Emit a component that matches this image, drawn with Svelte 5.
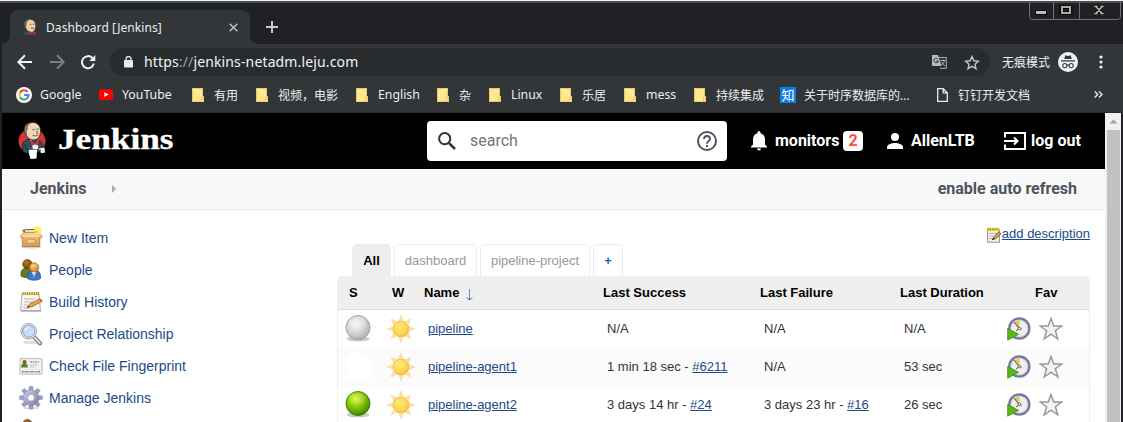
<script>
  const bookmarks = [
    { icon: 'google', label: 'Google', w: 83, gap: 24 },
    { icon: 'youtube', label: 'YouTube', w: 93, gap: 23 },
    { icon: 'folder', label: '有用', w: 64 },
    { icon: 'folder', label: '视频，电影', w: 100 },
    { icon: 'folder', label: 'English', w: 81 },
    { icon: 'folder', label: '杂', w: 52 },
    { icon: 'folder', label: 'Linux', w: 71 },
    { icon: 'folder', label: '乐居', w: 64 },
    { icon: 'folder', label: 'mess', w: 70 },
    { icon: 'folder', label: '持续集成', w: 86 },
    { icon: 'zhi', label: '关于时序数据库的...', w: 157, gap: 24 },
    { icon: 'file', label: '钉钉开发文档', w: 157, gap: 21 }
  ];
  const tasks = [
    { icon: 'box', label: 'New Item' },
    { icon: 'people', label: 'People' },
    { icon: 'notepad', label: 'Build History' },
    { icon: 'lens', label: 'Project Relationship' },
    { icon: 'card', label: 'Check File Fingerprint' },
    { icon: 'gear', label: 'Manage Jenkins' },
    { icon: 'people', label: '' }
  ];
  const jobs = [
    { ball: 'grey', name: 'pipeline', ok: 'N/A', bad: 'N/A', dur: 'N/A' },
    { ball: 'blank', name: 'pipeline-agent1', ok: '1 min 18 sec - ', okLink: '#6211', bad: 'N/A', dur: '53 sec' },
    { ball: 'green', name: 'pipeline-agent2', ok: '3 days 14 hr - ', okLink: '#24', bad: '3 days 23 hr - ', badLink: '#16', dur: '26 sec' }
  ];
  const rays = [0, 45, 90, 135, 180, 225, 270, 315];
</script>

{#snippet icon(name)}
  {#if name === 'google'}
    <svg width="16" height="16" viewBox="0 0 16 16"><circle cx="8" cy="8" r="8" fill="#fff" /><g fill="none" stroke-width="2"><path d="M11.6 4.8A4.6 4.6 0 0 0 4 5.8" stroke="#ea4335" /><path d="M4 5.8A4.6 4.6 0 0 0 4 10.3" stroke="#fbbc05" /><path d="M4 10.3A4.6 4.6 0 0 0 10.9 11.5" stroke="#34a853" /><path d="M10.9 11.5A4.6 4.6 0 0 0 12.6 8.1H8.2" stroke="#4285f4" /></g></svg>
  {:else if name === 'youtube'}
    <svg width="14" height="16" viewBox="0 0 14 16"><rect y="2.2" width="14" height="10.8" rx="2.2" fill="#f00" /><path d="M5.3 5.2 9.6 7.6 5.3 10z" fill="#fff" /></svg>
  {:else if name === 'folder'}
    <svg width="12" height="14" viewBox="0 0 12 14"><path d="M0 0H11V8H12V14H0z" fill="#ffe795" /><path d="M.5 .5H10.5V8.5H11.500V13.500H.5zM9.500 13V9" fill="none" stroke="#ecc95c" /></svg>
  {:else if name === 'zhi'}
    <span class="zhi">知</span>
  {:else if name === 'file'}
    <svg width="11" height="14" viewBox="0 0 11 14"><path d="M.7 .7H6.2L10.3 4.8V13.3H.7zM6.2 .7V4.8H10.3" fill="none" stroke="#e8eaed" stroke-width="1.3" /></svg>
  {:else if name === 'box'}
    <svg width="24" height="24" viewBox="0 0 24 24"><ellipse cx="12" cy="21" rx="10" ry="1.5" fill="#ccc" /><path d="M3 4 5 6.5H19L21 4 16 3H8z" fill="#8f5902" /><path d="M6 4h10l1 2H6z" fill="#e9dcc0" /><path d="M4.5 6.5 1 10.5 4 13.5H20.5L23.5 10.5 19.5 6.5z" fill="#f3cf92" stroke="#b87e3a" stroke-width=".7" /><path d="M3.2 10.5H20.8V20.5H3.2z" fill="url(#carton)" stroke="#a86e2c" stroke-width=".7" /><path d="M3.2 10.5H20.8" stroke="#f8dfb4" /><rect x="8" y="13.5" width="8" height="3.5" rx=".8" fill="#f2cf98" stroke="#bc823f" stroke-width=".5" /><circle cx="18.8" cy="4.2" r="4.2" fill="#ffec45" opacity=".65" /><path d="M18.8 0l1 3.1 3.2 1-3.2 1-1 3.2-1-3.2-3.2-1 3.2-1z" fill="#fff55c" /></svg>
  {:else if name === 'people'}
    <svg width="24" height="24" viewBox="0 0 24 24"><path d="M2 18c-1-7 3-8 6-8s6 1 5 8c-3 2-8 2-11 0z" fill="#617f22" stroke="#3b5310" stroke-width=".7" /><circle cx="8.4" cy="6.2" r="4.7" fill="url(#skin2)" stroke="#65400c" stroke-width=".7" /><path d="M8.5 20.5c-.6-6.5 2.5-8.5 6.5-8.5s7 2 6.5 8.5c-3.5 2.3-9.5 2.3-13 0z" fill="#3c78bd" stroke="#204a87" stroke-width=".7" /><path d="M12.6 13.4 15 19l2.3-5.6z" fill="#fff" /><path d="M14.8 14.3l-.7 4.5.9 2 .9-2z" fill="#6ba0d8" /><circle cx="15.1" cy="9.4" r="4.6" fill="url(#skin)" stroke="#a85f10" stroke-width=".7" /></svg>
  {:else if name === 'notepad'}
    <svg width="24" height="24" viewBox="0 0 24 24"><path d="M2 21.6H23" stroke="#bbb" /><path d="M3 4H20L21.5 20.5H1.5z" fill="#f4f4f2" stroke="#999" stroke-width=".8" /><path d="M3 2.6H20V5H3z" fill="#e6d06a" /><path d="M4 2v3M6.3 2v3M8.600 2v3M10.900 2v3M13.200 2v3M15.500 2v3M17.800 2v3M19.600 2v3" stroke="#a58a1e" stroke-width="1" /><path d="M5 9H16M5 12H14M4.7 15H9M4.5 18H11" stroke="#b5b5b5" stroke-width="1.1" /><path d="M8.2 17.4 11 13.8 21 8.7 23.3 11.2 13 16.7z" fill="#e9a443" stroke="#8c5a15" stroke-width=".7" /><path d="M20 9.2l2.2 2.5 1.3-.8-1.9-2.5z" fill="#d35a4a" /><path d="M8.2 17.4 9.4 15.8 10.4 17z" fill="#222" /></svg>
  {:else if name === 'lens'}
    <svg width="24" height="24" viewBox="0 0 24 24"><ellipse cx="13" cy="20.5" rx="9" ry="1.8" fill="#ddd" /><path d="M14.8 14.8 21 21.2" stroke="#777" stroke-width="4.2" stroke-linecap="round" /><path d="M15 15 20.8 21" stroke="#d6d7d4" stroke-width="2.4" stroke-linecap="round" /><circle cx="9.7" cy="9.2" r="7.8" fill="#eee" stroke="#8c8e8a" stroke-width=".8" /><circle cx="9.7" cy="9.2" r="6" fill="url(#glass)" stroke="#6d97cb" stroke-width=".9" /><path d="M5.5 9.2C5 5.5 8 4 11 4.5 9.5 6 8 9 5.5 9.2z" fill="#fff" opacity=".7" /></svg>
  {:else if name === 'card'}
    <svg width="24" height="24" viewBox="0 0 24 24"><rect x=".9" y="4.6" width="22.2" height="15.6" rx="1" fill="#f0f0ee" stroke="#aaa" stroke-width=".8" /><path d="M2 13.6c0-3 1.3-4.4 3.6-4.4s3.4 1.4 3.2 4.4z" fill="#617f22" /><circle cx="5.5" cy="8.1" r="2.1" fill="#8b5a1b" /><path d="M11 8h9" stroke="#777" stroke-dasharray="2 .6" /><path d="M11 11h7M11 13h5" stroke="#bbb" stroke-width=".8" /><path d="M3 17.900H21" stroke="#888" stroke-width="1" /><path d="M3.5 17V18M8 17V18M13 17V18M20.5 17V18" stroke="#555" /></svg>
  {:else if name === 'gear'}
    <svg width="24" height="24" viewBox="0 0 24 24"><ellipse cx="12" cy="22" rx="8" ry="1.3" fill="#ddd" />{#each rays as r}<path d="M9.800 5 10.400 .3H13.600L14.200 5z" fill="#9c9ec2" stroke="#777a9f" stroke-width=".5" transform="rotate({r} 12 11.7)" />{/each}<circle cx="12" cy="11.7" r="5.900" fill="none" stroke="#777a9f" stroke-width="4.200" /><circle cx="12" cy="11.7" r="5.700" fill="none" stroke="url(#steel)" stroke-width="4" /><circle cx="12" cy="11.7" r="3.4" fill="#fff" stroke="#777a9f" stroke-width=".6" /></svg>
  {/if}
{/snippet}

<div class="window">
  <header class="titlebar">
    <div class="tab">
      <svg class="fav" width="14" height="16" viewBox="0 0 14 16"><path d="M0 16c0-3 2-4 4-4h6c2 0 3 1 3 4z" fill="#344a57" /><path d="M2 3C3 0 10-1 12 4c1 4 0 8-3 9-4 0-7-3-7-10z" fill="#efcfaa" /><path d="M1.500 8C0 2 4 0 8 .6 5 1.500 3.600 2.500 3.600 5L3 9z" fill="#6e6057" /><path d="M7 5.3h1.4M10 5.3h1.4M8 9.2h3" stroke="#49362d" stroke-width=".8" /><path d="M6 12l2.5 1.2L12 12.5V15l-3-1-3 1.2z" fill="#d3272c" /></svg>
      <span class="tabname">Dashboard [Jenkins]</span>
      <svg width="9" height="9" viewBox="0 0 9 9"><path d="M.7 .7 8.3 8.3M8.3 .7.7 8.3" stroke="#bdc1c6" stroke-width="1.5" /></svg>
    </div>
    <svg class="plus" width="12" height="12" viewBox="0 0 12 12"><path d="M6 0V12M0 6H12" stroke="#c8cbcf" stroke-width="2" /></svg>
    <div class="controls">
      <svg width="92" height="18" viewBox="0 0 92 18"><path d="M.5 0V14.5Q.5 17.5 3.5 17.5H88.5Q91.5 17.5 91.5 14.5V0M24.5 0V17M50.5 0V17" fill="none" stroke="#6f7173" /><rect x="6.5" y="8.500" width="11" height="4" fill="#bbb" stroke="#08090a" /><rect x="32.5" y="5" width="9" height="6" fill="none" stroke="#08090a" stroke-width="4" /><rect x="33" y="5" width="8" height="6" fill="none" stroke="#aaa" stroke-width="2" /><path d="M67 4.500 73 11.500M73 4.500 67 11.500" stroke="#08090a" stroke-width="4" /><path d="M67 4.500 73 11.500M73 4.500 67 11.500M65.500 4.500h3M71.500 4.500h3M65.500 11.500h3M71.500 11.500h3" stroke="#bbb" stroke-width="1.6" /></svg>
    </div>
  </header>

  <div class="toolbar">
    <svg width="76" height="16" viewBox="0 0 76 16" fill="none"><path d="M15 8H2M8 1.3 1.4 8 8 14.7" stroke="#f1f3f4" stroke-width="2" /><path d="M33 8H46M40 1.3 46.6 8 40 14.7" stroke="#7d8184" stroke-width="2" /><path d="M75.500 4.200A6 6 0 1 0 76.800 9.500" stroke="#f1f3f4" stroke-width="2" /><path d="M78.300 1V7H72.300z" fill="#f1f3f4" /></svg>
    <div class="omnibox">
      <svg class="lock" width="9" height="12" viewBox="0 0 9 12"><rect y="4" width="9" height="7.5" rx="1" fill="#e8eaed" /><path d="M2 5V3a2.4 2.4 0 0 1 5 0V5" fill="none" stroke="#e8eaed" stroke-width="1.3" /></svg>
      <span class="url">https<i>://</i>jenkins-netadm.leju.com</span>
      <svg class="translate" width="15" height="14" viewBox="0 0 15 14"><path d="M6 2.5H14.3V13.3H8" fill="none" stroke="#aeb2b6" stroke-width="1" /><path d="M0 0H6L9.5 11H1Q0 11 0 10z" fill="#b6b9bd" /><path d="M6 4A2.3 2.3 0 1 0 6.4 6H4.3" fill="none" stroke="#292c2f" stroke-width="1" /><path d="M8.4 5.5H13.4M11 4.5v1M12.4 5.5C12 8 10.5 9.5 9.4 10M9.6 7C10.5 9 12 10.3 13.2 11" stroke="#aeb2b6" fill="none" /></svg>
      <svg width="16" height="15" viewBox="0 0 16 15"><path d="M8 1.5 9.9 5.8 14.5 6.2 11 9.3 12 13.7 8 11.4 4 13.7 5 9.3 1.5 6.2 6.1 5.8z" fill="none" stroke="#c4c7ca" stroke-width="1.4" /></svg>
    </div>
    <span class="incog">无痕模式</span>
    <svg class="spy" width="20" height="20" viewBox="0 0 20 20"><circle cx="10" cy="10" r="10" fill="#f1f3f4" /><path d="M6.2 7 7.3 3.3 10 4 12.7 3.3 13.8 7zM3 8.2H17V9.4H3z" fill="#35393d" /><g fill="none" stroke="#35393d" stroke-width="1.1"><circle cx="6.8" cy="13.6" r="2.1" /><circle cx="13.2" cy="13.6" r="2.1" /><path d="M8.9 13.3Q10 12.6 11.1 13.3" /></g></svg>
    <svg width="4" height="14" viewBox="0 0 4 14" fill="#f1f3f4"><circle cx="2" cy="2" r="1.6" /><circle cx="2" cy="7" r="1.6" /><circle cx="2" cy="12" r="1.6" /></svg>
  </div>

  <nav class="bookmarks">
    {#each bookmarks as b}
      <div class="bm" style="width:{b.w}px"><span class="bmicon" style="width:{b.gap ?? 22}px">{@render icon(b.icon)}</span><span class:latin={/^[A-Z]|mess/.test(b.label)}>{b.label}</span></div>
    {/each}
    <svg width="9" height="7" viewBox="0 0 9 7"><path d="M.7 .5 3.7 3.5 .7 6.5M5 .5 8 3.5 5 6.5" fill="none" stroke="#e8eaed" stroke-width="1.4" /></svg>
  </nav>

  <div class="viewport">
    <div class="page">
      <div class="top">
        <svg class="logo" width="160" height="42" viewBox="0 0 160 42">
          <defs>
            <linearGradient id="carton" x2="0" y2="1"><stop stop-color="#eab875" /><stop offset="1" stop-color="#d79a50" /></linearGradient>
            <radialGradient id="skin" cx=".4" cy=".3"><stop stop-color="#ffd28e" /><stop offset="1" stop-color="#e8953a" /></radialGradient>
            <radialGradient id="skin2" cx=".4" cy=".3"><stop stop-color="#b07c33" /><stop offset="1" stop-color="#80500f" /></radialGradient>
            <linearGradient id="glass" x2="1" y2="1"><stop stop-color="#a9cbf2" /><stop offset="1" stop-color="#dcebfb" /></linearGradient>
            <linearGradient id="steel" x2="1" y2="1"><stop stop-color="#c3c5df" /><stop offset="1" stop-color="#8386ae" /></linearGradient>
            <radialGradient id="grey" cx=".4" cy=".35" r=".65"><stop stop-color="#f4f4f4" /><stop offset=".5" stop-color="#dcdcdc" /><stop offset="1" stop-color="#b4b4b4" /></radialGradient>
            <radialGradient id="green" cx=".4" cy=".3" r=".7"><stop stop-color="#dbf53d" /><stop offset=".45" stop-color="#92cf08" /><stop offset="1" stop-color="#3d8500" /></radialGradient>
            <radialGradient id="sun" cx=".4" cy=".35" r=".7"><stop stop-color="#ffe97a" /><stop offset=".6" stop-color="#fdd855" /><stop offset="1" stop-color="#f5bd48" /></radialGradient>
          </defs>
          <ellipse cx="14" cy="20" rx="13.500" ry="12.500" fill="#d33833" />
          <path d="M5.500 31.500C4 27 4 25 5 22 7 19 10 18 13 18l7 .5c4 2 5.500 6 5.500 10-5 4-15 4-20 3z" fill="#335061" stroke="#111d25" stroke-width=".8" />
          <path d="M12 18 17 23 21 18 20 28H15z" fill="#f7f3ed" />
          <path d="M7 10C6.500 4 10 1.500 14.500 1.500c4.500 0 7.500 2.500 8 7.500.3 6-2.500 10-7 10C11 18.500 8 16 7 10z" fill="#f0d6b7" stroke="#231f20" stroke-width=".7" />
          <path d="M7 13C4.800 6 8 2 13.500 1.500 10.500 3 9 4.500 9.300 8.500l-1.300.5.600 4z" fill="#85776a" stroke="#3c332c" stroke-width=".5" />
          <path d="M14.500 8.500h2.500M18.500 8h2.500M18.500 9.500l1 2.800-1.200.4M14.500 14.300Q17.500 16 20.500 13.700" fill="none" stroke="#5a4434" stroke-width=".8" />
          <path d="M12.500 20 17 21.500 21 19.500V24.500L17 23 12.800 25z" fill="#d33833" stroke="#611412" stroke-width=".5" />
          <path d="M10.500 29 19 28.500 18.500 37.500 12.500 38 11 33z" fill="#fff" />
          <path d="M21 27.500 26.500 26.500 27 31.500 23 32.200z" fill="#f5f2ed" />
          <path d="M7 23c.5 4 1.500 6 4 7.500M20 31l3-2" stroke="#152a38" fill="none" />
          <text x="40" y="28" textLength="115.500" lengthAdjust="spacingAndGlyphs">Jenkins</text>
        </svg>
        <div class="search">
          <svg width="18" height="18" viewBox="0 0 18 18" fill="none" stroke="#333"><circle cx="6.700" cy="6.700" r="5.600" stroke-width="2" /><path d="M10.800 10.800 17 17" stroke-width="2.500" /></svg>
          <span>search</span>
          <svg width="20" height="20" viewBox="0 0 20 20" fill="none" stroke="#4d545d"><circle cx="10" cy="10" r="9" stroke-width="2" /><path d="M7 8A3 3 0 0 1 13 8C13 10 10 10 10 12.700" stroke-width="1.900" /><path d="M10 14V16" stroke-width="2" /></svg>
        </div>
        <svg class="bell" width="16" height="20" viewBox="0 0 16 20" fill="#fff"><path d="M8 19.500a2 2 0 0 0 2-2H6a2 2 0 0 0 2 2zM14 13.500v-5c0-3.100-1.600-5.600-4.500-6.300v-.7a1.500 1.500 0 0 0-3 0v.7C3.600 2.900 2 5.400 2 8.500v5l-2 2v1h16v-1z" /></svg>
        <b class="mon">monitors</b><span class="badge">2</span>
        <svg class="user" width="16" height="16" viewBox="0 0 16 16" fill="#fff"><circle cx="8" cy="4" r="4" /><path d="M0 16V14C0 11.300 5.300 10 8 10s8 1.300 8 4v2z" /></svg>
        <b class="name">AllenLTB</b>
        <svg class="exit" width="22" height="18" viewBox="0 0 22 18" fill="none" stroke="#fff" stroke-width="2"><path d="M1 5.500V1H21V17H1V12.500M0 9H13M10 5.500 13.500 9 10 12.500" /></svg>
        <b class="out">log out</b>
      </div>
      <div class="crumbs"><b>Jenkins</b><svg width="4" height="8" viewBox="0 0 4 8"><path d="M0 0 4 4 0 8z" fill="#aaa" /></svg><b class="refresh">enable auto refresh</b></div>

      <div class="body">
        <aside>
          {#each tasks as t}
            <div class="task">{@render icon(t.icon)}<span>{t.label}</span></div>
          {/each}
        </aside>
        <main>
          <div class="desc">
            <svg width="16" height="16" viewBox="0 0 16 16"><path d="M1.500 2.500H13.500V15.200H1.500z" fill="#efefed" stroke="#888" stroke-width=".9" /><path d="M1 1H13.500V3.800H1z" fill="#e8cf35" /><path d="M2 .8V3.500M4.300 .8V3.500M6.600 .8V3.500M8.900 .8V3.500M11.200 .8V3.500" stroke="#a08515" stroke-width=".8" /><path d="M3 6.500H11M3 9H8M3 11.500H6" stroke="#bbb" /><path d="M6.500 12.500 8 9.500 13 4.700 15 6.800 9.700 11.800z" fill="#dca044" stroke="#6b4b18" stroke-width=".8" /><path d="M6 13 7 10.800 8.500 12.200z" fill="#222" /></svg><u>add description</u>
          </div>
          <div class="tabs">
            <span class="all">All</span><span style="width:83px">dashboard</span><span style="width:110px">pipeline-project</span><span class="add">+</span>
          </div>
          <div class="table">
            <div class="row head"><span>S</span><span>W</span><span>Name <svg class="sort" width="7" height="12" viewBox="0 0 7 12"><path d="M3.500 0V11" stroke="#5c8de0" /><path d="M1 8.500 3.500 11 6 8.500" fill="none" stroke="#35476d" /></svg></span><span>Last Success</span><span>Last Failure</span><span>Last Duration</span><span>Fav</span></div>
            {#each jobs as j}
              <div class="row">
                <span>
                  {#if j.ball === 'blank'}
                    <svg width="26" height="27" viewBox="0 0 26 27"><circle cx="13" cy="13" r="13" fill="#fff" /><rect y="20" width="26" height="7" rx="3" fill="#fff" /></svg>
                  {:else}
                    <svg width="26" height="27" viewBox="0 0 26 27"><ellipse cx="13" cy="23.800" rx="11.500" ry="2.700" fill="#777" opacity=".4" /><circle cx="13" cy="12.500" r="12" fill="url(#{j.ball})" stroke={j.ball === 'green' ? '#3c7a08' : '#999'} stroke-width=".9" /><ellipse cx="12" cy="7.500" rx="8" ry="5.200" fill="#fff" opacity=".13" /></svg>
                  {/if}
                </span>
                <span><svg width="28" height="28" viewBox="0 0 28 28">{#each rays as r}<path d="M11.600 6.500 14 0 16.400 6.500z" fill="#ffe3a4" stroke="#f7cf85" stroke-width=".5" transform="rotate({r} 14 14)" />{/each}<circle cx="14" cy="14" r="7.900" fill="url(#sun)" stroke="#f3ba58" stroke-width=".8" /></svg></span>
                <span><u>{j.name}</u></span>
                <span>{j.ok}{#if j.okLink}<u>{j.okLink}</u>{/if}</span>
                <span>{j.bad}{#if j.badLink}<u>{j.badLink}</u>{/if}</span>
                <span>{j.dur}</span>
                <span class="acts">
                  <svg width="24" height="24" viewBox="0 0 24 24"><circle cx="12.300" cy="11.500" r="10" fill="#eeefec" stroke="#7678a0" stroke-width="2.400" /><circle cx="12.300" cy="11.500" r="8.500" fill="none" stroke="#bfc1cb" stroke-width=".7" /><path d="M12.300 11.500 7.200 5.500A8 8 0 0 1 12.500 3.500z" fill="#e5c54f" /><path d="M7 5 12 11.500 9 14M12 11.500 14.500 12" stroke="#444" stroke-width=".9" fill="none" /><circle cx="12.400" cy="11.500" r="1.300" fill="#fff" stroke="#333" stroke-width=".7" /><path d="M.7 11.500 11.500 17.300 .7 23.200z" fill="#58b817" stroke="#358c08" stroke-width=".8" /></svg>
                  <svg width="24" height="24" viewBox="0 0 24 24"><path d="M12 1.500 14.700 9H22.800L16.400 13.700 18.800 22 12 17.200 5.200 22 7.600 13.700 1.200 9H9.300z" fill="#f3f3f2" stroke="#989a96" stroke-width="1.500" /></svg>
                </span>
              </div>
            {/each}
          </div>
        </main>
      </div>
    </div>
    <div class="scroll"><svg width="16" height="17" viewBox="0 0 16 17"><path d="M4.500 10.500 8.500 6.500 12.500 10.500z" fill="#a3a3a3" /></svg><div class="thumb"></div></div>
  </div>
</div>

<style>
  :global(body) { margin: 0; overflow: hidden; }
  * { box-sizing: border-box; }
  svg { display: block; flex: none; }
  .window { width: 1123px; height: 422px; overflow: hidden; background: #202124; border-top: 1px solid #eef5f3; font-family: "Noto Sans", "Noto Sans CJK SC", sans-serif; }
  .titlebar { height: 43px; display: flex; border-top: 2px solid #4b4d4f; padding-left: 10px; }
  .tab { position: relative; width: 240px; height: 34px; margin-top: 7px; background: #323639; border-radius: 8px 8px 0 0; display: flex; align-items: center; padding: 0 12px 0 13px; color: #eceef0; font-size: 12px; }
  .tab::before, .tab::after { content: ""; position: absolute; bottom: 0; width: 8px; height: 8px; }
  .tab::before { left: -8px; background: radial-gradient(circle at 0 0, transparent 7.5px, #323639 8px); }
  .tab::after { right: -8px; background: radial-gradient(circle at 100% 0, transparent 7.5px, #323639 8px); }
  .tabname { margin-left: 9px; flex: 1; white-space: nowrap; letter-spacing: .08px; }
  .plus { margin: 18px 0 0 16px; }
  .controls { margin: -1px 2px 0 auto; }
  .toolbar { margin-left: 2px; height: 36px; background: #323639; display: flex; align-items: center; padding-left: 15px; color: #f1f3f4; }
  .toolbar > svg:first-child { overflow: visible; }
  .omnibox { margin-left: 17px; width: 880px; height: 28px; border-radius: 14px; background: #282c2f; display: flex; align-items: center; padding: 0 10px 0 14px; }
  .url { margin-left: 11px; flex: 1; font-size: 14px; letter-spacing: .14px; padding-bottom: 2px; }
  .url i { font-style: normal; color: #9aa0a6; }
  .translate { margin-right: 17px; }
  .incog { margin-left: 12px; width: 48px; font-size: 12px; white-space: nowrap; }
  .spy { margin: 0 21px 0 8px; }
  .bookmarks { margin-left: 2px; height: 33px; background: #323639; border-bottom: 1px solid #27292b; display: flex; align-items: center; padding: 0 0 3px 14px; color: #eceef0; font-size: 12px; }
  .bm { display: flex; align-items: center; white-space: nowrap; flex: none; height: 20px; }
  .bmicon { flex: none; }
  .latin { font-size: 12.3px; }
  .zhi { display: block; width: 16px; height: 16px; background: #0d80e8; color: #fff; font: 13px/15px "Noto Sans CJK SC", sans-serif; text-align: center; }
  .viewport { margin: 0 2px; height: 309px; display: flex; background: #fff; }
  .page { width: 1103px; }
  .scroll { width: 16px; background: #f1f1f1; }
  .thumb { width: 13px; height: 292px; background: #c1c1c1; margin-left: 2px; }
  .top { height: 56px; background: #000; display: flex; align-items: center; color: #fff; font: 16px Roboto, sans-serif; padding-left: 16px; }
  .logo { margin-top: 2px; }
  .logo text { font: bold 29px "Liberation Serif", serif; fill: #fff; stroke: #fff; stroke-width: .3px; }
  .search { margin-left: 249px; width: 300px; height: 40px; border-radius: 4px; background: #fff; color: #757575; display: flex; align-items: center; padding: 0 10px 0 11px; }
  .search span { flex: 1; margin-left: 14px; padding-bottom: 1px; }
  .bell { margin-left: 24px; }
  .top b { white-space: nowrap; font-weight: 700; padding-bottom: 1px; }
  .mon { margin-left: 8px; width: 68px; }
  .badge { width: 20px; height: 20px; border-radius: 4px; background: #fff; color: #ff4b4b; font-weight: 700; text-align: center; line-height: 20px; }
  .user { margin-left: 24px; }
  .name { margin-left: 8px; width: 93px; }
  .out { margin-left: 5px; }
  .crumbs { height: 41px; background: #f8f8f8; border-bottom: 1px solid #e9e9e9; display: flex; align-items: center; color: #4d545d; font: 16px Roboto, sans-serif; padding: 0 28px; }
  .crumbs b { font-weight: 700; padding-bottom: 1px; }
  .crumbs svg { margin-left: 25px; }
  .refresh { margin-left: auto; }
  .body { display: flex; height: 212px; overflow: hidden; font-family: "Liberation Sans", Arial, sans-serif; color: #333; }
  aside { width: 335px; padding: 12px 0 0 17px; }
  .task { height: 32px; display: flex; align-items: center; gap: 6px; color: #204a87; font-size: 14px; }
  main { width: 753px; font-size: 13px; }
  u { color: #204a87; text-underline-offset: 1px; }
  .desc { display: flex; justify-content: flex-end; align-items: center; height: 16px; margin-top: 16px; line-height: 15px; }
  .desc u { margin-top: -1px; }
  .desc svg { margin-top: 2px; }
  .tabs { display: flex; gap: 3px; margin: 2px 0 0 15px; height: 32px; }
  .tabs span { border: 1px solid #eee; border-bottom: 0; border-radius: 5px 5px 0 0; color: #999; text-align: center; line-height: 32px; }
  .tabs .all { width: 39px; background: #eee; color: #000; font-weight: bold; }
  .tabs .add { width: 30px; border-color: #d9edfb; color: #1565c0; font-weight: bold; }
  .table { border: 1px solid #eee; border-top: 0; border-radius: 5px 5px 0 0; overflow: hidden; }
  .row { display: grid; grid-template-columns: 42px 41px 179px 157px 140px 103px 1fr; padding: 0 0 1px 7px; height: 38px; align-items: center; white-space: nowrap; }
  .row:nth-child(3) { background: #fbfbfb; }
  .head { height: 34px; background: #efefef; border-bottom: 1px solid #ddd; color: #000; font-weight: bold; padding: 0 0 0 11px; grid-template-columns: 43px 32px 179px 157px 140px 135px 1fr; }
  .head span { height: 15px; line-height: 15px; }
  .sort { display: inline-block; vertical-align: -4px; margin-left: 3px; }
  .acts { display: flex; gap: 8px; }
</style>
